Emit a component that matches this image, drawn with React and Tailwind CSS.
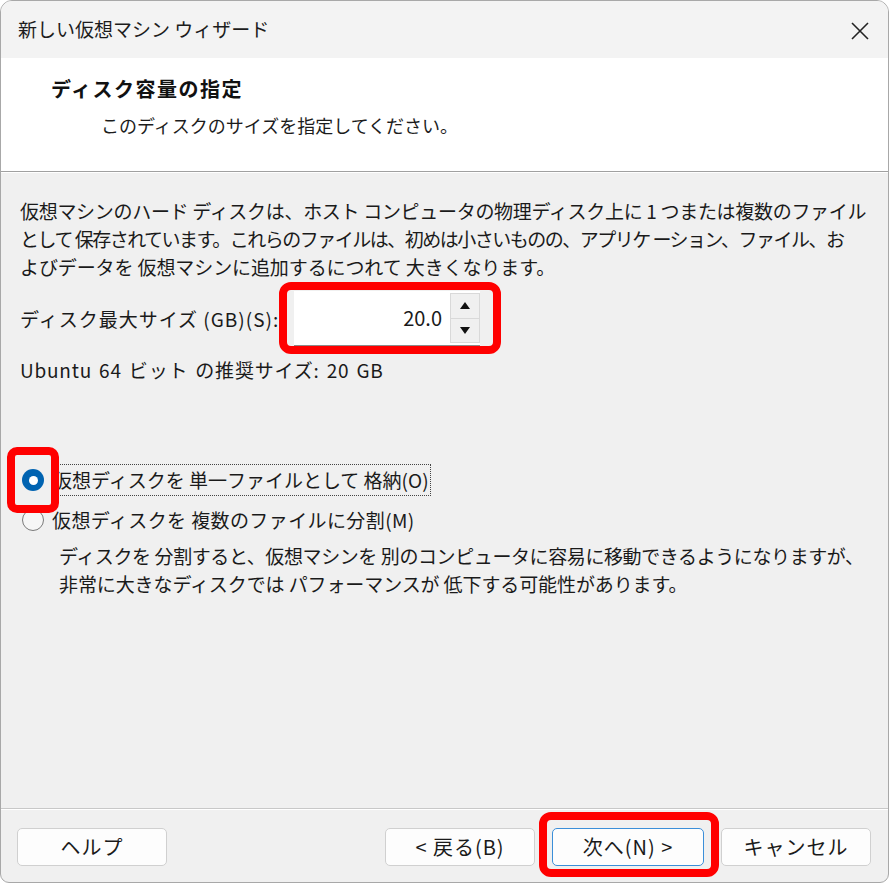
const jp = { fontFamily: '"Noto Sans CJK JP", "Noto Sans", sans-serif' };

function Radio({ checked }) {
  return checked ? (
    <span className="w-[22px] h-[22px] rounded-full bg-[#0063b1] flex items-center justify-center shrink-0">
      <span className="w-[9px] h-[9px] rounded-full bg-white"></span>
    </span>
  ) : (
    <span className="w-[22px] h-[22px] rounded-full border-[1.5px] border-[#7a7a7a] bg-[#f6f6f6] shrink-0"></span>
  );
}

function Btn({ children, primary }) {
  return (
    <button
      className={
        primary
          ? 'w-[152px] h-[38px] rounded-[5px] bg-[#fdfdfd] border-[1.5px] border-[#3b8fd9] text-[20px] text-[#1a1a1a] tracking-[1px]'
          : 'w-[150px] h-[38px] rounded-[5px] bg-[#fdfdfd] border border-[#d0d0d0] text-[20px] text-[#1a1a1a] tracking-[1px]'
      }
    >
      {children}
    </button>
  );
}

export default function App() {
  return (
    <div className="w-[891px] h-[885px] bg-white relative" style={jp}>
      <div className="w-[889px] h-[883px] border border-[#a8a8a8] rounded-t-[12px] rounded-b-[9px] overflow-hidden flex flex-col bg-[#f0f0f0]">
        {/* title bar */}
        <div className="h-[57px] bg-[#f3f3f3] flex items-center justify-between pl-[17px] pr-[18px] shrink-0">
          <span className="text-[19px] text-[#1c1c1c]">新しい仮想マシン ウィザード</span>
          <svg width="20" height="20" viewBox="0 0 20 20" className="mt-[2px]">
            <path d="M2 2 L18 18 M18 2 L2 18" stroke="#222" strokeWidth="1.6" />
          </svg>
        </div>
        {/* header */}
        <div className="h-[114px] bg-white shrink-0 pl-[50px] pt-[15px] border-b border-[#a0a0a0]">
          <div className="text-[20px] font-bold text-[#111] leading-[32px] tracking-[1.5px]">ディスク容量の指定</div>
          <div className="text-[18px] text-[#1c1c1c] leading-[32px] pl-[50px] mt-[4px]">このディスクのサイズを指定してください。</div>
        </div>
        <div className="h-px bg-white shrink-0"></div>
        {/* body */}
        <div className="flex-1 pl-[19px] pt-[24px] text-[#1a1a1a] text-[19px]">
          <div className="leading-[28px] whitespace-nowrap">
            <div className="tracking-[-0.3px]">仮想マシンのハード ディスクは、ホスト コンピュータの物理ディスク上に 1 つまたは複数のファイル</div>
            <div className="tracking-[-1.5px]">として 保存されています。これらのファイルは、初めは小さいものの、アプリケ ーション、ファイル、お</div>
            <div className="tracking-[-0.1px]">よびデータを 仮想マシンに追加するにつれて 大きくなります。</div>
          </div>
          <div className="flex items-center mt-[10px]">
            <span className="w-[274px] whitespace-nowrap tracking-[1px]">ディスク最大サイズ (GB)(S):</span>
            <div className="flex h-[56px] w-[186px] bg-white border-b-2 border-[#8a8a8a]">
              <div className="flex-1 flex items-center justify-end pr-[8px] text-[20px]">20.0</div>
              <div className="w-[30px] flex flex-col bg-[#f0f0f0] border border-[#d9d9d9] my-[2px]">
                <div className="flex-1 flex items-center justify-center border-b border-[#d9d9d9]">
                  <svg width="10" height="7" viewBox="0 0 10 7"><path d="M5 0 L10 7 L0 7 Z" fill="#111" /></svg>
                </div>
                <div className="flex-1 flex items-center justify-center">
                  <svg width="10" height="7" viewBox="0 0 10 7"><path d="M0 0 L10 0 L5 7 Z" fill="#111" /></svg>
                </div>
              </div>
            </div>
          </div>
          <div className="mt-[9px] leading-[28px] tracking-[0.8px] [word-spacing:2px]">Ubuntu 64 ビット の推奨サイズ: 20 GB</div>
          <div className="mt-[76px] pl-[2px]">
            <div className="flex items-center h-[40px]">
              <Radio checked />
              <span className="ml-[7px] px-[1px] border border-dotted border-[#444] leading-[30px]">仮想ディスクを 単一ファイルとして 格納(O)</span>
            </div>
            <div className="flex items-center h-[40px]">
              <Radio />
              <span className="ml-[8px] leading-[30px] tracking-[0.4px]">仮想ディスクを 複数のファイルに分割(M)</span>
            </div>
            <div className="pl-[37px] leading-[28px] mt-[2px] whitespace-nowrap">
              <div className="tracking-[-0.4px]">ディスクを 分割すると、仮想マシンを 別のコンピュータに容易に移動できるようになりますが、</div>
              <div className="tracking-[-0.1px]">非常に大きなディスクでは パフォーマンスが 低下する可能性があります。</div>
            </div>
          </div>
        </div>
        {/* footer */}
        <div className="h-px bg-[#c8c8c8] shrink-0"></div>
        <div className="h-[73px] shrink-0 flex items-start pt-[18px] pl-[16px] pr-[17px] border-t border-white">
          <Btn>ヘルプ</Btn>
          <div className="flex-1"></div>
          <div className="flex gap-[17px]">
            <Btn>&lt; 戻る(B)</Btn>
            <Btn primary>次へ(N) &gt;</Btn>
            <Btn>キャンセル</Btn>
          </div>
        </div>
      </div>
      {/* red annotation boxes */}
      <div className="absolute left-[279px] top-[282px] w-[222px] h-[72px] border-[8px] border-[#ff0000] rounded-[12px]"></div>
      <div className="absolute left-[7px] top-[447px] w-[52px] h-[66px] border-[8px] border-[#ff0000] rounded-[10px]"></div>
      <div className="absolute left-[539px] top-[812px] w-[180px] h-[65px] border-[8px] border-[#ff0000] rounded-[12px]"></div>
    </div>
  );
}
